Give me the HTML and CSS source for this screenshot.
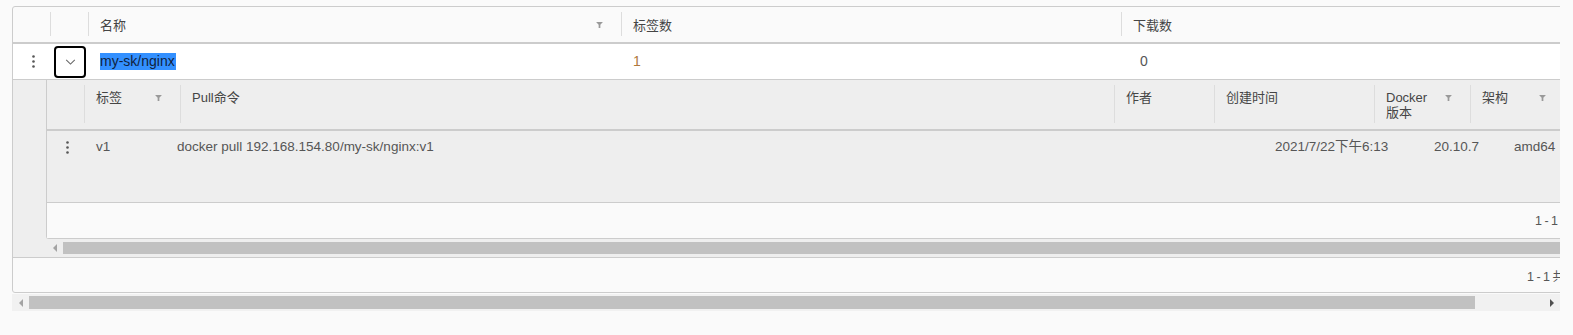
FILE: index.html
```html
<!DOCTYPE html>
<html lang="zh-CN">
<head>
    <meta charset="UTF-8">
    <title>仓库 - 镜像</title>
    <link rel="stylesheet" href="styles.css">
</head>
<body>
    <div class="page">
        <div class="viewport">
            <div class="datagrid">
                <div class="dg-head">
                    <div class="cell"></div>
                    <div class="cell sep"></div>
                    <div class="cell sep filterable">
                        <span>名称</span>
                        <svg class="filter" viewBox="0 0 8 7"><path d="M0 0H8L5 3.2V7H3V3.2Z"/></svg>
                    </div>
                    <div class="cell sep">标签数</div>
                    <div class="cell sep">下载数</div>
                </div>

                <div class="dg-row">
                    <div class="cell cell-action">
                        <svg class="kebab" viewBox="0 0 3 13"><circle cx="1.5" cy="1.5" r="1.3"/><circle cx="1.5" cy="6.5" r="1.3"/><circle cx="1.5" cy="11.5" r="1.3"/></svg>
                    </div>
                    <div class="cell cell-expand">
                        <button class="expand-btn">
                            <svg viewBox="0 0 12 7"><polyline points="1,1 6,6 11,1"/></svg>
                        </button>
                    </div>
                    <div class="cell"><span class="selected">my-sk/nginx</span></div>
                    <div class="cell count">1</div>
                    <div class="cell downloads">0</div>
                </div>

                <div class="dg-detail">
                    <div class="sub-grid">
                        <div class="sub-head">
                            <div class="cell"></div>
                            <div class="cell sep filterable">
                                <span>标签</span>
                                <svg class="filter" viewBox="0 0 8 7"><path d="M0 0H8L5 3.2V7H3V3.2Z"/></svg>
                            </div>
                            <div class="cell sep">Pull命令</div>
                            <div class="cell sep">作者</div>
                            <div class="cell sep">创建时间</div>
                            <div class="cell sep filterable">
                                <span class="wrap">Docker 版本</span>
                                <svg class="filter" viewBox="0 0 8 7"><path d="M0 0H8L5 3.2V7H3V3.2Z"/></svg>
                            </div>
                            <div class="cell sep filterable">
                                <span>架构</span>
                                <svg class="filter" viewBox="0 0 8 7"><path d="M0 0H8L5 3.2V7H3V3.2Z"/></svg>
                            </div>
                        </div>
                        <div class="sub-row">
                            <div class="cell cell-action">
                                <svg class="kebab" viewBox="0 0 3 13"><circle cx="1.5" cy="1.5" r="1.3"/><circle cx="1.5" cy="6.5" r="1.3"/><circle cx="1.5" cy="11.5" r="1.3"/></svg>
                            </div>
                            <div class="cell">v1</div>
                            <div class="cell">docker pull 192.168.154.80/my-sk/nginx:v1</div>
                            <div class="cell"></div>
                            <div class="cell">2021/7/22下午6:13</div>
                            <div class="cell">20.10.7</div>
                            <div class="cell">amd64</div>
                        </div>
                        <div class="sub-foot"><span class="pager">1 - 1</span></div>
                    </div>
                    <div class="hscroll inner">
                        <div class="arrow"><span class="tri-left"></span></div>
                        <div class="thumb"></div>
                    </div>
                </div>

                <div class="dg-foot"><span class="pager">1 - 1 共</span></div>
            </div>

            <div class="hscroll outer">
                <div class="arrow"><span class="tri-left"></span></div>
                <div class="thumb"></div>
                <div class="track"></div>
                <div class="arrow"><span class="tri-right"></span></div>
            </div>
        </div>
    </div>
</body>
</html>
```

FILE: styles.css
```css
body {
    margin: 0;
    background: #fafafa;
    font-family: "Liberation Sans", "Noto Sans CJK SC", sans-serif;
    color: #565656;
}

.page {
    padding: 6px 0 0 12px;
}

.viewport {
    width: 1548px;
    overflow: hidden;
}

.datagrid {
    width: 1760px;
    border: 1px solid #ccc;
    border-radius: 3px;
    background: #fafafa;
}

.cell {
    position: relative;
    padding: 0 12px;
    white-space: nowrap;
}

.sep::before {
    content: "";
    position: absolute;
    left: 0;
    top: 5px;
    bottom: 6px;
    width: 1px;
    background: #ddd;
}

.filterable {
    display: flex;
    justify-content: space-between;
    padding-right: 18px;
}

.filter {
    width: 7px;
    height: 6px;
    fill: #999;
    flex-shrink: 0;
}

.kebab {
    width: 3px;
    height: 13px;
    fill: #565656;
}

/* outer grid */
.dg-head, .dg-row {
    display: grid;
    grid-template-columns: 37px 38px 533px 500px 1fr;
}

.dg-head {
    height: 35px;
    border-bottom: 2px solid #ccc;
    font-size: 13px;
    color: #454545;
}

.dg-head .cell {
    display: flex;
    align-items: center;
}

.dg-row {
    height: 35px;
    background: #fff;
    border-bottom: 1px solid #ccc;
    font-size: 14px;
}

.dg-row .cell {
    display: flex;
    align-items: center;
    padding-bottom: 1px;
}

.dg-row .downloads {
    padding-left: 19px;
}

.cell-action {
    justify-content: center;
    padding: 0 0 0 3px;
}

.dg-row .cell-expand {
    padding: 0 0 0 4px;
}

.expand-btn {
    width: 32px;
    height: 32px;
    margin-top: 1px;
    border: 2px solid #000;
    border-radius: 4px;
    background: #fff;
    padding: 0;
    display: flex;
    align-items: center;
    justify-content: center;
}

.expand-btn svg {
    width: 11px;
    height: 6px;
    fill: none;
    stroke: #666;
    stroke-width: 1.2;
}

.selected {
    background: #3390ff;
    color: #10223e;
    line-height: 17px;
    padding-right: 1px;
}

.count {
    color: #b0783a;
}

/* detail / nested grid */
.dg-detail {
    background: #eee;
    padding-left: 33px;
    border-bottom: 1px solid #ccc;
}

.sub-grid {
    border-left: 1px solid #ccc;
    border-bottom: 1px solid #ccc;
    border-bottom-left-radius: 3px;
}

.sub-head, .sub-row {
    display: grid;
    font-size: 13px;
}

.sub-head {
    grid-template-columns: 37px 96px 934px 100px 160px 96px 94px 1fr;
    height: 49px;
    border-bottom: 2px solid #ccc;
    color: #454545;
    line-height: 15px;
}

.sub-head .cell {
    padding-top: 10px;
}

.sub-head .filterable {
    align-items: flex-start;
}

.sub-head .filter {
    margin-top: 5px;
}

.sub-head .wrap {
    white-space: normal;
    width: 48px;
}

.sub-row {
    grid-template-columns: 37px 81px 700px 398px 159px 80px 1fr;
    height: 71px;
    border-bottom: 1px solid #ccc;
    font-size: 13.5px;
    line-height: 16px;
}

.sub-row .cell {
    padding-top: 8px;
}

.sub-row .cell-action {
    padding-top: 10px;
    display: flex;
    align-items: flex-start;
}

.sub-foot {
    height: 35px;
    background: #fafafa;
    display: flex;
    align-items: center;
}

.sub-foot .pager {
    margin-left: 1488px;
}

.dg-foot {
    height: 34px;
    display: flex;
    align-items: center;
}

.dg-foot .pager {
    margin-left: 1514px;
}

.pager {
    white-space: nowrap;
    font-size: 12.5px;
    word-spacing: -1px;
}

/* fake scrollbars */
.hscroll {
    display: flex;
    align-items: center;
    height: 17px;
    background: #f1f1f1;
}

.hscroll.inner {
    height: 18px;
    background: #eee;
}

.hscroll.outer {
    margin-top: 1px;
}

.arrow {
    width: 17px;
    height: 17px;
    display: flex;
    align-items: center;
    justify-content: center;
    flex-shrink: 0;
}

.tri-left {
    border-top: 4px solid transparent;
    border-bottom: 4px solid transparent;
    border-right: 4px solid #a3a3a3;
}

.tri-right {
    border-top: 4px solid transparent;
    border-bottom: 4px solid transparent;
    border-left: 4px solid #505050;
}

.thumb {
    height: 13px;
    background: #c1c1c1;
    flex-shrink: 0;
}

.inner .thumb {
    width: 1600px;
    height: 12px;
}

.outer .thumb {
    width: 1446px;
}

.track {
    flex: 1;
}
```
